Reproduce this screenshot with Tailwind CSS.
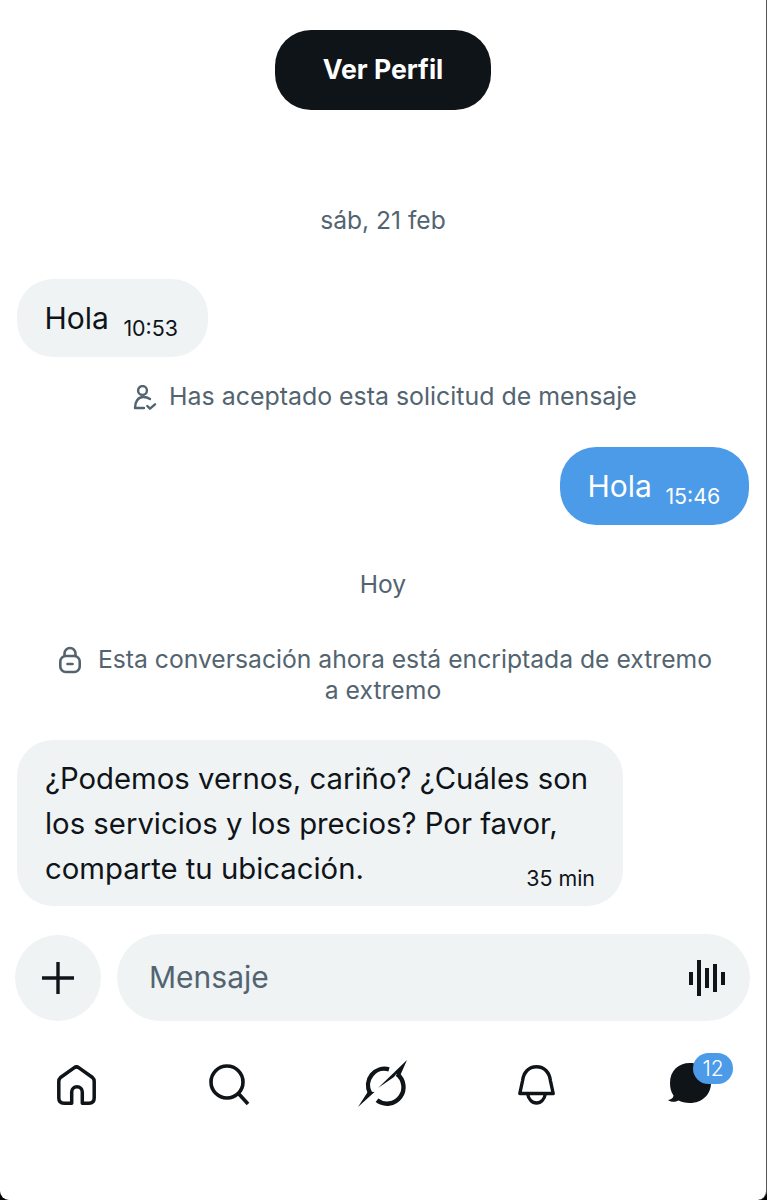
<!DOCTYPE html>
<html lang="es">
<head>
  <meta charset="UTF-8" />
  <meta name="viewport" content="width=device-width, initial-scale=1.0" />
  <title>Mensajes</title>
  <script src="https://cdn.jsdelivr.net/npm/@tailwindcss/browser@4"></script>
</head>
<body class="bg-black font-['Inter',sans-serif] text-[#0f1419]">
  <div class="w-[767px] h-[1200px] bg-white border-r border-[#555555] rounded-b-[9px] overflow-hidden">

    <!-- conversation -->
    <div class="flex flex-col pt-[30px]">
      <div class="flex justify-center">
        <button class="w-[216px] h-[80px] rounded-[36px] bg-[#0f1419] text-white text-[26.600px] font-bold">Ver Perfil</button>
      </div>

      <p class="mt-[95px] h-[30px] leading-[30px] text-center text-[24.600px] text-[#536471]">sáb, 21 feb</p>

      <div class="mt-[44px] ml-[17px] w-[191px] h-[78px] rounded-[36px] bg-[#eff3f4] flex pl-[27.500px]">
        <span class="mt-[21px] text-[30px] leading-[36px]">Hola</span>
        <span class="mt-[36px] ml-[14.500px] text-[21.400px] leading-[26px]">10:53</span>
      </div>

      <div class="mt-[24px] h-[32px] flex items-center justify-center gap-[12px] pl-[4px] text-[24.900px] text-[#536471]">
        <svg class="w-[24px] h-[25px]" viewBox="0 0 24 25" fill="none" stroke="#536471" stroke-width="2.400" stroke-linecap="round" stroke-linejoin="round">
          <circle cx="9.500" cy="5.500" r="4.400" />
          <path d="M2 23c0-6 3-11 8-11 3 0 5 .5 7 2M2 23h9" />
          <path d="m14.300 21 2.700 2.700 5-4.400" />
        </svg>
        <span>Has aceptado esta solicitud de mensaje</span>
      </div>

      <div class="mt-[34px] mr-[17px] self-end w-[189px] h-[78px] rounded-[36px] bg-[#4c9be8] text-white flex pl-[27.500px]">
        <span class="mt-[21px] text-[30px] leading-[36px]">Hola</span>
        <span class="mt-[36px] ml-[13.500px] text-[21.400px] leading-[26px]">15:46</span>
      </div>

      <p class="mt-[44px] h-[30px] leading-[30px] text-center text-[24.600px] text-[#536471]">Hoy</p>

      <div class="mt-[45px] text-[24.700px] leading-[31px] text-[#536471] text-center">
        <div class="flex items-center justify-center gap-[16px] pl-[4px]">
          <svg class="w-[24px] h-[28px]" viewBox="0 0 24 28" fill="none" stroke="#536471" stroke-width="2.600" stroke-linecap="round" stroke-linejoin="round">
            <path d="M6.500 10V7.500a5.500 5.500 0 0 1 11 0V10" />
            <rect x="2.300" y="10" width="19.400" height="16" rx="5.500" />
            <path d="M9.500 18h5" />
          </svg>
          <span>Esta conversación ahora está encriptada de extremo</span>
        </div>
        <p>a extremo</p>
      </div>

      <div class="relative mt-[34px] ml-[17px] w-[606px] h-[166px] rounded-[36px] bg-[#eff3f4] pl-[28px] pt-[16px] text-[29.300px] leading-[45px]">
        <p>¿Podemos vernos, cariño? ¿Cuáles son<br />los servicios y los precios? Por favor,<br />comparte tu ubicación.</p>
        <span class="absolute right-[28px] bottom-[15px] text-[21.400px] leading-[26px]">35 min</span>
      </div>

      <!-- composer -->
      <div class="mt-[28px] ml-[15px] flex gap-[16px]">
        <button class="w-[86px] h-[86px] mt-[1px] rounded-full bg-[#eff3f4] flex items-center justify-center">
          <svg class="w-[32px] h-[32px]" viewBox="0 0 32 32" stroke="#0f1419" stroke-width="3.400"><path d="M16 0v32M0 16h32" /></svg>
        </button>
        <div class="w-[633px] h-[87px] rounded-[44px] bg-[#eff3f4] flex items-center justify-between pl-[32px] pr-[24px]">
          <span class="text-[30px] text-[#536471]">Mensaje</span>
          <svg class="w-[37px] h-[36px]" viewBox="0 0 37 36" fill="#0f1419">
            <rect x="0" y="12" width="4" height="13" /><rect x="8" y="0" width="4" height="36" /><rect x="16" y="8" width="4" height="20" /><rect x="24" y="4" width="4" height="28" /><rect x="32" y="12" width="4" height="13" />
          </svg>
        </div>
      </div>
    </div>

    <!-- bottom nav -->
    <nav class="mt-[39px] flex pl-[57px] items-start">
      <svg class="w-[39px] h-[40px] mt-[5px]" viewBox="0 0 39 40" fill="none" stroke="#0f1419" stroke-width="3.500" stroke-linejoin="round">
        <path d="M17 2.800Q19.500 1 22 2.800L35.500 12.500Q37.200 14 37.200 16.500V33Q37.200 38.200 32 38.200H25.300V27a5.300 5.300 0 0 0-10.600 0V38.200H7Q1.800 38.200 1.800 33V16.500Q1.800 14 3.500 12.500Z" />
      </svg>
      <svg class="w-[41px] h-[41px] ml-[113px] mt-[4px]" viewBox="0 0 41 41" fill="none" stroke="#0f1419" stroke-width="3.600">
        <circle cx="18" cy="18" r="16" />
        <path d="m29 29 10 11" />
      </svg>
      <svg class="w-[49px] h-[47px] ml-[108px]" viewBox="0 0 49 47" fill="#0f1419">
        <path fill="none" stroke="#0f1419" stroke-width="4.400" d="M31 9.300A16.500 16.500 0 0 0 12 33" />
        <path fill="none" stroke="#0f1419" stroke-width="4.400" d="M19 40.300A16.500 16.500 0 0 0 39 14" />
        <path d="M49 0 20 28 36 17ZM49 0 36.500 12 41.500 17ZM0 47 16.500 32 10 31.500Z" />
      </svg>
      <svg class="w-[37px] h-[40px] ml-[111px] mt-[5px]" viewBox="0 0 37 40" fill="none" stroke="#0f1419" stroke-width="3.400" stroke-linejoin="round">
        <path d="M1.800 28.500 4.500 16C5.500 7 11 1.700 18.500 1.700S31.500 7 32.500 16L35.200 28.500Z" />
        <path d="M9.500 28.500C10.500 34 14 38 18.500 38S26.500 34 27.500 28.500" />
      </svg>
      <div class="relative ml-[113px] mt-[3px] w-[43px] h-[40px]">
        <svg class="w-[43px] h-[40px]" viewBox="0 0 43 40" fill="#0f1419">
          <path d="M22 0C10 0 2 8 2 20c0 5 1 9 3.500 12.500C5.500 35 3 36.500 0 37c2 2 7 2.500 10.500.5 3 1.500 6.500 2.500 11.500 2.500 12 0 21-8.500 21-20S34 0 22 0Z" />
        </svg>
        <span class="absolute left-[25px] top-[-10px] w-[40px] h-[31px] rounded-[15.500px] bg-[#4c9be8] text-white text-[21px] font-light leading-[31px] text-center">12</span>
      </div>
    </nav>
  </div>
</body>
</html>
